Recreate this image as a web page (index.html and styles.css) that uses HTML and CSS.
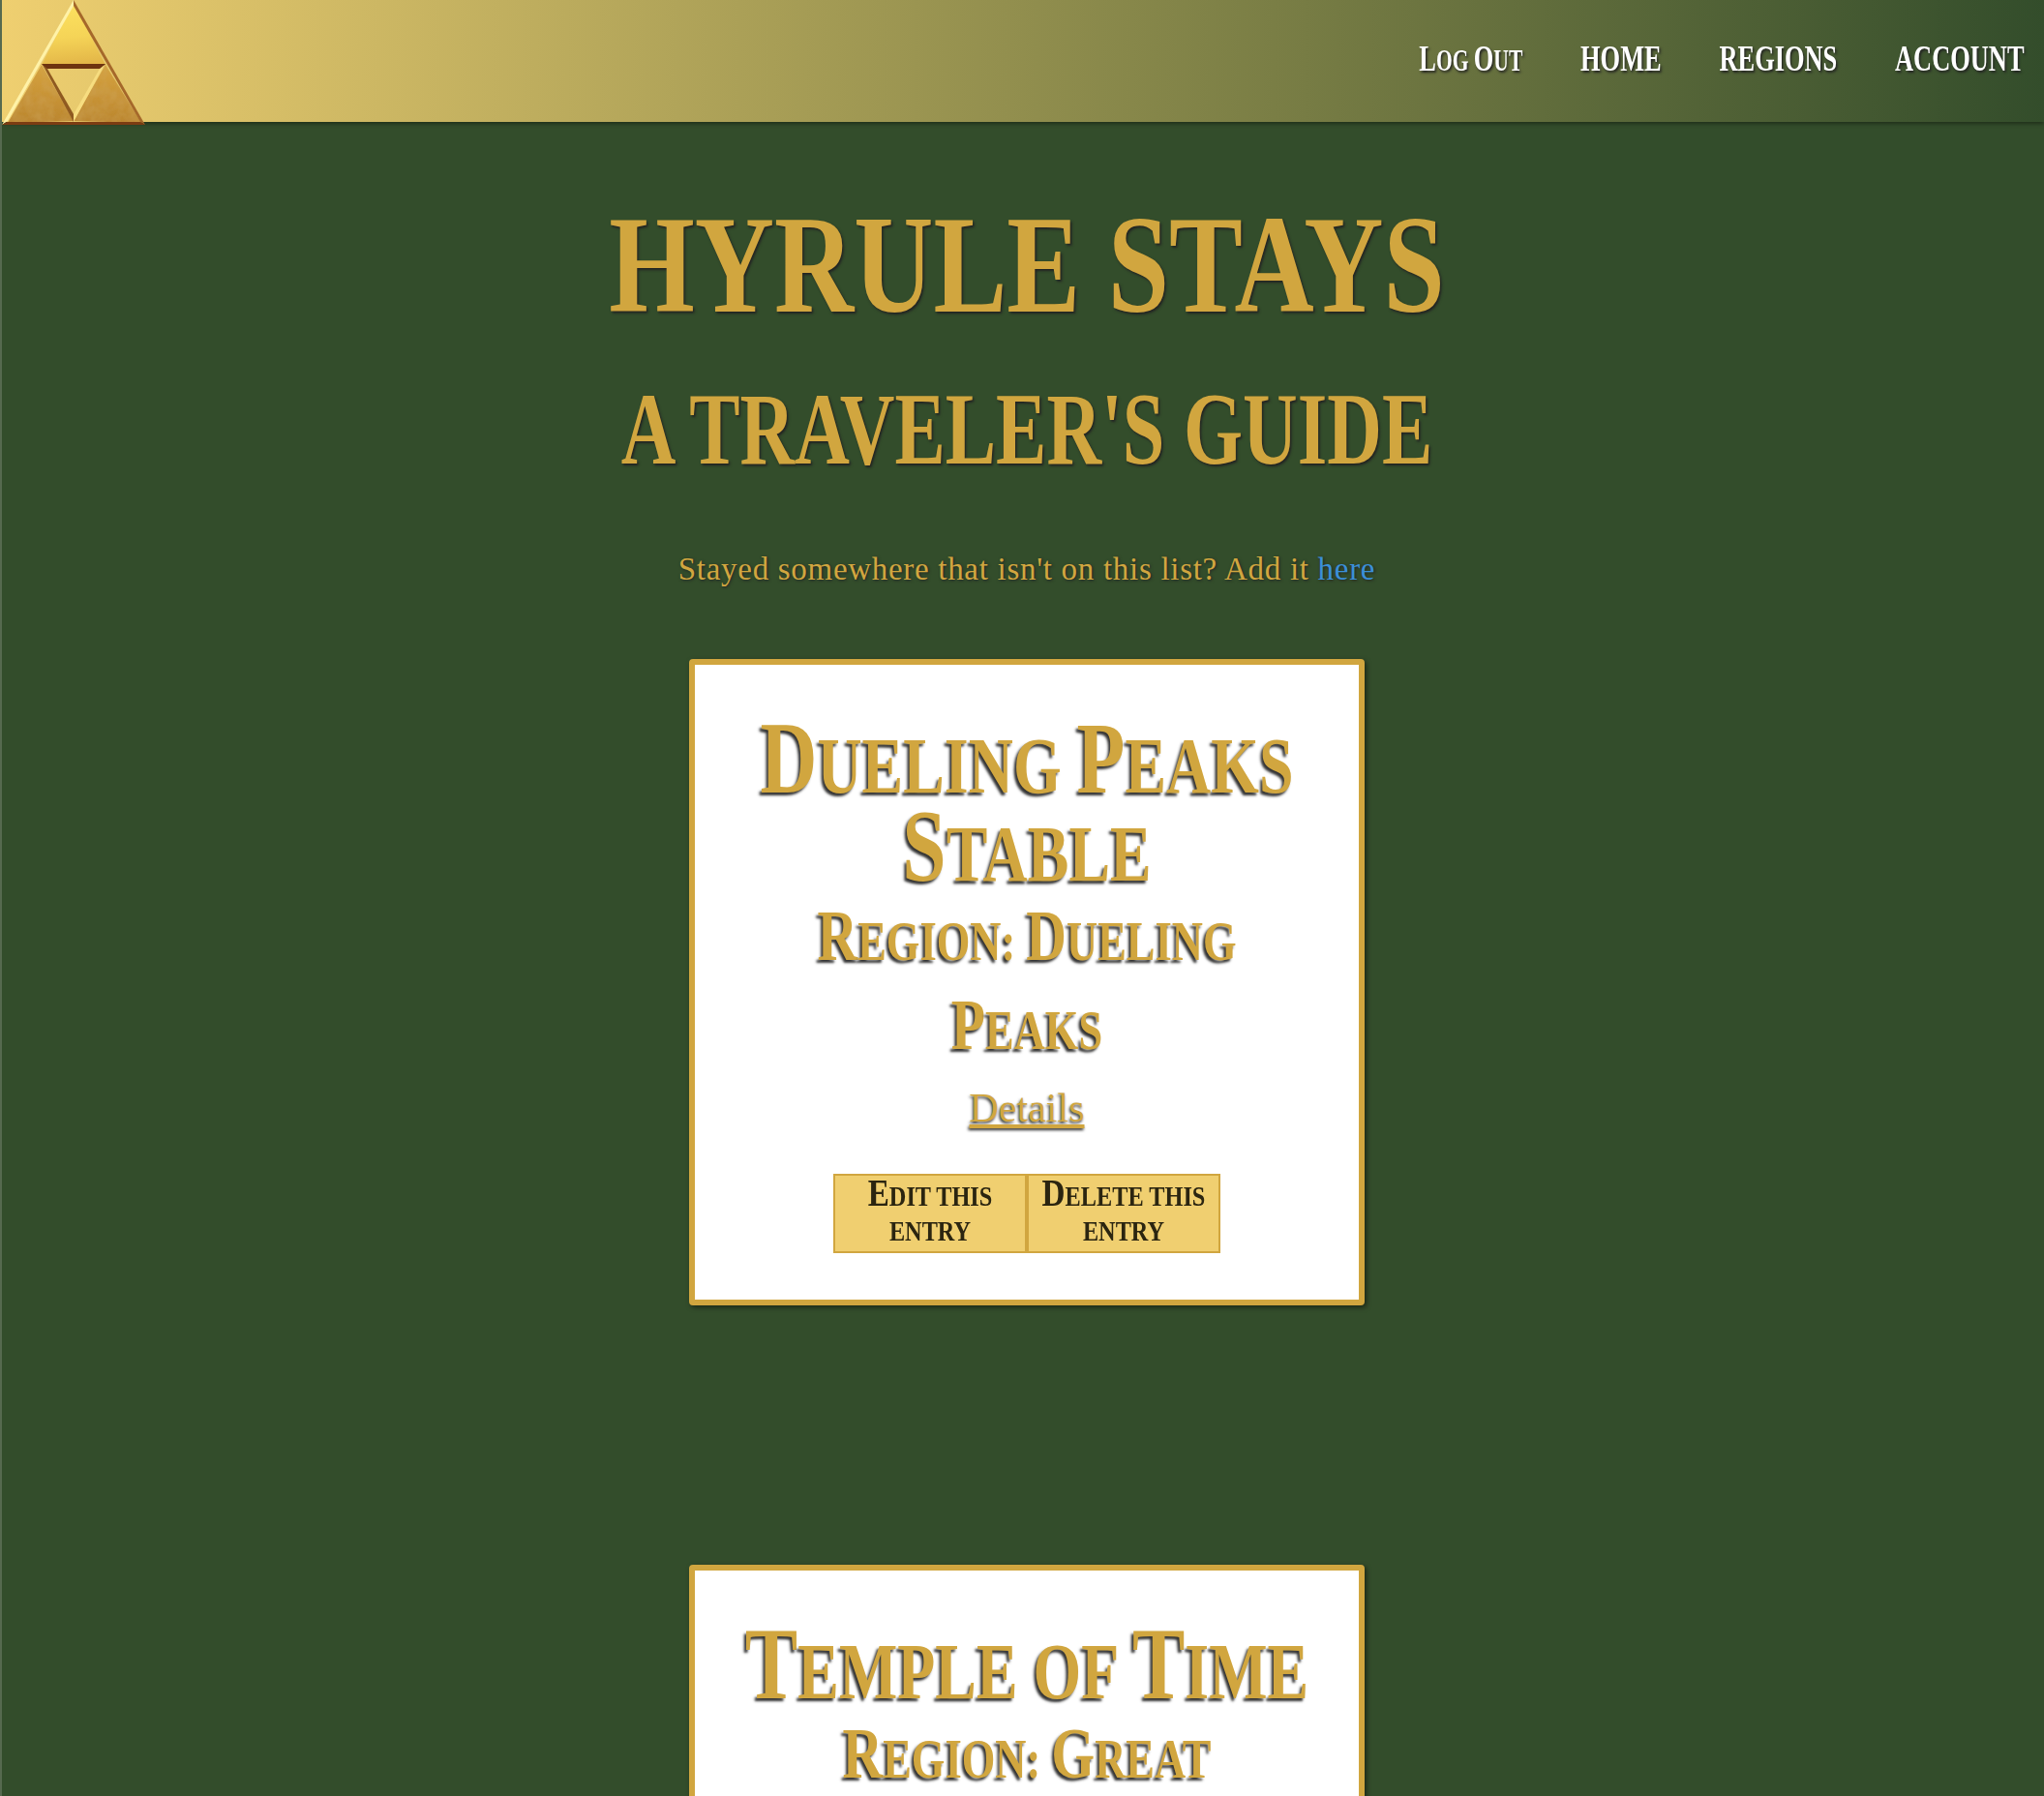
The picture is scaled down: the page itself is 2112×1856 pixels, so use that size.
FILE: index.html
```html
<!DOCTYPE html>
<html lang="en">
<head>
  <meta charset="UTF-8" />
  <title>Hyrule Stays</title>
  <link rel="stylesheet" href="styles.css">
</head>
<body>

<header class="topbar">
  <svg class="triforce" viewBox="0 0 150 130" width="150" height="130" aria-label="Triforce">
    <defs>
      <linearGradient id="topGold" x1="0.4" y1="0" x2="0.5" y2="1">
        <stop offset="0" stop-color="#fde25f"/>
        <stop offset="0.55" stop-color="#f5d457"/>
        <stop offset="1" stop-color="#e3b648"/>
      </linearGradient>
      <linearGradient id="lowGold" x1="0" y1="0" x2="0" y2="1">
        <stop offset="0" stop-color="#d6a33f"/>
        <stop offset="1" stop-color="#bb8630"/>
      </linearGradient>
      <filter id="mottle" x="0" y="0" width="100%" height="100%">
        <feTurbulence type="fractalNoise" baseFrequency="0.09" numOctaves="3" seed="4"/>
        <feColorMatrix values="0 0 0 0 0.62  0 0 0 0 0.38  0 0 0 0 0.1  0.8 0 0 0 -0.25"/>
        <feComposite in2="SourceGraphic" operator="in" result="spots"/>
        <feMerge>
          <feMergeNode in="SourceGraphic"/>
          <feMergeNode in="spots"/>
        </feMerge>
      </filter>
    </defs>
    <!-- three faces -->
    <polygon points="76,3 109,67 43,67" fill="url(#topGold)"/>
    <g filter="url(#mottle)">
      <polygon points="43,67 76,125 8,127" fill="url(#lowGold)"/>
      <polygon points="109,67 146,127 76,125" fill="url(#lowGold)"/>
    </g>
    <!-- bevels -->
    <polygon points="76,0 76,6 8,125 2,129" fill="#fff2a8"/>
    <polygon points="76,0 150,129 145,126 76,6" fill="#a5682a"/>
    <polygon points="2,129 150,129 145,126 7,126" fill="#7c3c12"/>
    <polygon points="43,66 109,66 105,71 47,71" fill="#6e3410"/>
    <polygon points="44,67 49,71 76,118 76,126" fill="#8f5a20"/>
    <polygon points="108,67 103,71 76,118 76,126" fill="#f7dd80"/>
  </svg>
  <nav class="topnav">
    <a href="#"><span class="cap">L</span>og <span class="cap">O</span>ut</a>
    <a href="#">HOME</a>
    <a href="#">REGIONS</a>
    <a href="#">ACCOUNT</a>
  </nav>
</header>

<main class="content">
  <h1 class="title"><span class="line">HYRULE STAYS</span></h1>
  <h2 class="subtitle"><span class="line">A TRAVELER'S GUIDE</span></h2>
  <p class="lead">Stayed somewhere that isn't on this list? Add it <a href="#">here</a></p>

  <section class="card">
    <h2 class="card-name">
      <span class="line"><span class="cap">D</span>ueling <span class="cap">P</span>eaks</span>
      <span class="line"><span class="cap">S</span>table</span>
    </h2>
    <h3 class="card-region">
      <span class="line"><span class="cap">R</span>egion: <span class="cap">D</span>ueling</span>
      <span class="line"><span class="cap">P</span>eaks</span>
    </h3>
    <a class="card-link" href="#">Details</a>
    <div class="card-actions">
      <button type="button"><span class="label"><span class="cap">E</span>dit this<br>entry</span></button>
      <button type="button"><span class="label"><span class="cap">D</span>elete this<br>entry</span></button>
    </div>
  </section>

  <section class="card">
    <h2 class="card-name">
      <span class="line"><span class="cap">T</span>emple of <span class="cap">T</span>ime</span>
    </h2>
    <h3 class="card-region">
      <span class="line"><span class="cap">R</span>egion: <span class="cap">G</span>reat</span>
      <span class="line"><span class="cap">P</span>lateau</span>
    </h3>
    <a class="card-link" href="#">Details</a>
  </section>
</main>

</body>
</html>
```

FILE: styles.css
```css
html, body {
  height: 100%;
}
body {
  margin: 0;
  overflow: hidden;
  background-color: #334d2b;
  border-left: 2px solid #56694f;
  font-family: "Liberation Serif", serif;
  color: #d1a63f;
}
.cap {
  line-height: 0;
}
.topbar {
  height: 126px;
  display: flex;
  justify-content: space-between;
  align-items: flex-start;
  background: linear-gradient(to right, #efcf70, #334d2b);
  box-shadow: 0 2px 4px rgba(0, 0, 0, 0.4);
}
.triforce {
  display: block;
  flex-shrink: 0;
  margin-left: -2px;
}
.topnav {
  display: flex;
  align-items: baseline;
  gap: 86px;
  padding: 38px 29px 0 0;
  transform: scaleX(0.695);
  transform-origin: right center;
}
.topnav a {
  color: #fff;
  font-size: 38px;
  font-weight: bold;
  line-height: 44px;
  text-decoration: none;
  text-shadow: 2px 2px 3px #222;
}
.topnav a:first-child {
  font-size: 31px;
  text-transform: uppercase;
}
.topnav a:first-child .cap {
  font-size: 38px;
}
.content {
  padding-left: 8px;
  text-align: center;
}
.line {
  display: block;
  white-space: nowrap;
}
.title {
  margin: 62px 0 0;
  font-size: 145px;
  line-height: 170px;
  text-shadow: 2px 2px 3px #222;
}
.title .line {
  transform: scaleX(0.785);
}
.subtitle {
  margin: 26px 0 0;
  font-size: 106px;
  line-height: 120px;
  text-shadow: 2px 2px 3px #222;
}
.subtitle .line {
  transform: scaleX(0.74);
}
.lead {
  margin: 64px 0 0;
  font-size: 33px;
  line-height: 40px;
  letter-spacing: 0.7px;
  text-shadow: 1px 1px 3px #222;
}
.lead a {
  color: #3b8fd8;
  text-decoration: none;
}
.card {
  box-sizing: border-box;
  width: 698px;
  height: 668px;
  margin: 73px auto 268px;
  padding: 59px 0 44px;
  background: #fff;
  border: 6px solid #d1a63f;
  border-radius: 4px;
  box-shadow: 2px 2px 5px rgba(0, 0, 0, 0.5);
}
.card-name {
  margin: 0;
  font-size: 83px;
  line-height: 91px;
  text-transform: uppercase;
  text-shadow: -3px 3px 3px #333;
}
.card-name .cap {
  font-size: 106px;
}
.card-name .line {
  margin: 0 -60px;
  transform: scaleX(0.77);
}
.card-region {
  margin: -1px 0 0;
  font-size: 57px;
  line-height: 92px;
  text-transform: uppercase;
  text-shadow: -3px 3px 3px #333;
}
.card-region .cap {
  font-size: 74px;
}
.card-region .line {
  transform: scaleX(0.78);
}
.card-link {
  display: block;
  width: fit-content;
  margin: 9px auto 0;
  font-size: 42px;
  line-height: 50px;
  color: #d1a63f;
  text-shadow: -1px 2px 3px #333;
}
.card-actions {
  display: flex;
  justify-content: center;
  margin-top: 43px;
}
.card-actions button {
  box-sizing: border-box;
  width: 200px;
  height: 82px;
  padding: 0;
  background: #f0cf70;
  border: 2px solid #d1a63f;
  border-radius: 0;
  color: #2b2510;
  font-family: "Liberation Serif", serif;
  font-size: 30px;
  font-weight: bold;
  line-height: 36px;
  text-transform: uppercase;
}
.card-actions .label {
  display: block;
  margin: 0 -20px;
  white-space: nowrap;
  transform: scaleX(0.81);
}
.card-actions .cap {
  font-size: 41px;
}
```
